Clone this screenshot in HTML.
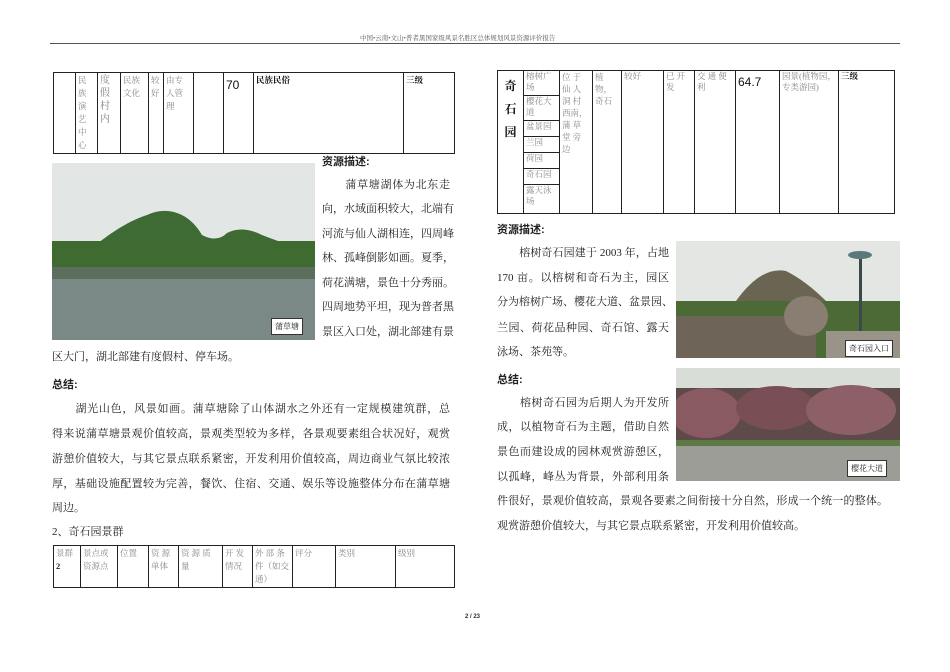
<!DOCTYPE html>
<html><head><meta charset="utf-8"><style>
*{margin:0;padding:0;box-sizing:border-box}
body{width:950px;height:672px;background:#fff;position:relative;overflow:hidden;font-family:"Liberation Serif","Noto Serif CJK SC","Noto Sans CJK SC",serif;color:#222}
.a{position:absolute}
.ln{position:absolute;font-size:11px;line-height:14px;text-align:justify;text-align-last:justify;white-space:nowrap}
.b{font-weight:bold;font-family:"Liberation Sans","Noto Sans CJK SC",sans-serif}
table{position:absolute;border-collapse:collapse}
td{border:1px solid #222;vertical-align:top;font-size:8.5px;line-height:13px;color:#888;padding:1px 2px;font-family:"Liberation Serif","Noto Serif CJK SC",serif}
.rt td{line-height:11px;padding:0 2px}
.lab{position:absolute;background:#fff;border:1px solid #333;font-size:8px;padding:2px 3px;color:#222}
</style></head><body>
<div class="a" style="left:360px;top:33px;font-size:6.5px;color:#555">中国•云南•文山•普者黑国家级风景名胜区总体规划风景资源评价报告</div>
<div class="a" style="left:50px;top:43px;width:850px;height:1px;background:#555"></div>

<table style="left:53px;top:72px;width:402px;height:78px">
<tr><td style="width:22px"></td><td style="width:22px">民<br>族<br>演<br>艺<br>中<br>心</td><td style="width:23px;font-size:10px;line-height:13px">度<br>假<br>村<br>内</td><td style="width:28px">民族<br>文化</td><td style="width:15px">较<br>好</td><td style="width:30px">由专<br>人管<br>理</td><td style="width:30px"></td><td style="width:30px;color:#111;font-family:'Liberation Sans',sans-serif;font-size:12px;padding-top:6px">70</td><td style="width:150px;color:#111;font-weight:bold">民族民俗</td><td style="color:#111;font-weight:bold">三级</td></tr>
</table>

<div class="a" style="left:52px;top:163px;width:263px;height:177px;background:#e2e7e6;overflow:hidden">
<svg width="263" height="177" viewBox="0 0 263 177" style="position:absolute;left:0;top:0"><path d="M40 85 Q70 60 95 52 Q110 45 125 50 Q140 55 150 72 Q165 80 175 70 Q190 62 210 72 Q230 80 263 90 L263 110 L0 110 Z" fill="#3e6a33"/><rect x="0" y="78" width="263" height="28" fill="#3f6a30"/><rect x="0" y="104" width="263" height="73" fill="#7a8886"/><rect x="0" y="104" width="263" height="12" fill="#5c6e5c"/></svg>
</div>
<div class="lab" style="left:271px;top:318px">蒲草塘</div>

<div class="a b" style="left:322px;top:153px;font-size:11px">资源描述:</div>
<div class="ln" style="left:322px;top:178px;width:128px">　　蒲草塘湖体为北东走</div>
<div class="ln" style="left:322px;top:202px;width:128px">向，水域面积较大，北端有</div>
<div class="ln" style="left:322px;top:227px;width:128px">河流与仙人湖相连，四周峰</div>
<div class="ln" style="left:322px;top:251px;width:128px">林、孤峰倒影如画。夏季，</div>
<div class="ln" style="left:322px;top:276px;width:128px">荷花满塘，景色十分秀丽。</div>
<div class="ln" style="left:322px;top:300px;width:128px">四周地势平坦，现为普者黑</div>
<div class="ln" style="left:322px;top:325px;width:128px">景区入口处，湖北部建有景</div>
<div class="ln" style="left:52px;top:350px;text-align-last:left">区大门，湖北部建有度假村、停车场。</div>
<div class="a b" style="left:52px;top:376px;font-size:11px">总结:</div>
<div class="ln" style="left:52px;top:402px;width:398px">　　湖光山色，风景如画。蒲草塘除了山体湖水之外还有一定规模建筑群，总</div>
<div class="ln" style="left:52px;top:427px;width:398px">得来说蒲草塘景观价值较高，景观类型较为多样，各景观要素组合状况好，观赏</div>
<div class="ln" style="left:52px;top:452px;width:398px">游憩价值较大，与其它景点联系紧密，开发利用价值较高，周边商业气氛比较浓</div>
<div class="ln" style="left:52px;top:477px;width:398px">厚，基础设施配置较为完善，餐饮、住宿、交通、娱乐等设施整体分布在蒲草塘</div>
<div class="ln" style="left:52px;top:501px;text-align-last:left">周边。</div>
<div class="ln" style="left:52px;top:525px;text-align-last:left">2、奇石园景群</div>

<table style="left:53px;top:545px;width:402px;height:40px">
<tr><td style="width:27px">景群<br><b style="color:#222">2</b></td><td style="width:37px">景点或<br>资源点</td><td style="width:31px">位置</td><td style="width:30px">资 源<br>单体</td><td style="width:44px">资 源 质<br>量</td><td style="width:30px">开 发<br>情况</td><td style="width:40px">外 部 条<br>件（如交<br>通）</td><td style="width:43px">评分</td><td style="width:60px">类别</td><td>级别</td></tr>
</table>

<table class="rt" style="left:497px;top:70px;width:398px;height:144px">
<tr><td rowspan="7" style="width:26px;color:#111;font-weight:bold;font-size:12px;line-height:23px;padding-top:4px;text-align:center">奇<br>石<br>园</td><td style="width:36px;height:25px">榕树广<br>场</td><td rowspan="7" style="width:33px;line-height:12px">位 于<br>仙 人<br>洞 村<br>西南，<br>蒲 草<br>堂 旁<br>边</td><td rowspan="7" style="width:29px;line-height:12px">植<br>物，<br>奇石</td><td rowspan="7" style="width:42px">较好</td><td rowspan="7" style="width:31px">已 开<br>发</td><td rowspan="7" style="width:41px">交 通 便<br>利</td><td rowspan="7" style="width:44px;color:#111;font-family:'Liberation Sans',sans-serif;font-size:12px;padding-top:6px">64.7</td><td rowspan="7" style="width:59px">园景(植物园，<br>专类游园)</td><td rowspan="7" style="color:#111;font-weight:bold">三级</td></tr>
<tr><td style="height:25px">樱花大<br>道</td></tr>
<tr><td style="height:16px">盆景园</td></tr>
<tr><td style="height:16px">兰园</td></tr>
<tr><td style="height:16px">荷园</td></tr>
<tr><td style="height:16px">奇石园</td></tr>
<tr><td>露天泳<br>场</td></tr>
</table>

<div class="a b" style="left:497px;top:221px;font-size:11px">资源描述:</div>
<div class="ln" style="left:497px;top:246px;width:172px">　　榕树奇石园建于 2003 年，占地</div>
<div class="ln" style="left:497px;top:271px;width:172px">170 亩。以榕树和奇石为主，园区</div>
<div class="ln" style="left:497px;top:295px;width:172px">分为榕树广场、樱花大道、盆景园、</div>
<div class="ln" style="left:497px;top:321px;width:172px">兰园、荷花品种园、奇石馆、露天</div>
<div class="ln" style="left:497px;top:345px;text-align-last:left">泳场、茶苑等。</div>
<div class="a b" style="left:497px;top:371px;font-size:11px">总结:</div>
<div class="ln" style="left:497px;top:396px;width:172px">　　榕树奇石园为后期人为开发所</div>
<div class="ln" style="left:497px;top:420px;width:172px">成，以植物奇石为主题，借助自然</div>
<div class="ln" style="left:497px;top:445px;width:172px">景色而建设成的园林观赏游憩区，</div>
<div class="ln" style="left:497px;top:470px;width:172px">以孤峰，峰丛为背景，外部利用条</div>
<div class="ln" style="left:497px;top:494px;width:391px">件很好，景观价值较高，景观各要素之间衔接十分自然，形成一个统一的整体。</div>
<div class="ln" style="left:497px;top:519px;text-align-last:left">观赏游憩价值较大，与其它景点联系紧密，开发利用价值较高。</div>

<div class="a" style="left:676px;top:241px;width:224px;height:117px;overflow:hidden;background:#e4e6e3">
<svg width="224" height="117"><path d="M60 60 Q85 25 110 30 Q130 40 150 60 Z" fill="#6a6552"/><rect x="0" y="60" width="224" height="57" fill="#4c6a35"/><rect x="0" y="75" width="140" height="42" fill="#6e6558"/><ellipse cx="130" cy="75" rx="22" ry="20" fill="#8a7e72"/><rect x="183" y="15" width="3" height="80" fill="#3a4a4a"/><ellipse cx="184" cy="14" rx="12" ry="4" fill="#5a7a7a"/><rect x="150" y="90" width="74" height="27" fill="#9a938a"/></svg>
</div>
<div class="lab" style="left:845px;top:340px">奇石园入口</div>
<div class="a" style="left:676px;top:368px;width:224px;height:113px;overflow:hidden;background:#d9ddd8">
<svg width="224" height="113"><rect x="0" y="20" width="224" height="55" fill="#5e4a48"/><ellipse cx="30" cy="45" rx="35" ry="25" fill="#8a5a62"/><ellipse cx="100" cy="40" rx="40" ry="22" fill="#7a4e55"/><ellipse cx="175" cy="42" rx="45" ry="25" fill="#8d6068"/><rect x="0" y="72" width="224" height="41" fill="#9d9d98"/><rect x="0" y="72" width="224" height="6" fill="#5d7a45"/></svg>
</div>
<div class="lab" style="left:847px;top:460px">樱花大道</div>

<div class="a b" style="left:465px;top:614px;font-size:6px;color:#333">2 / 23</div>
</body></html>
